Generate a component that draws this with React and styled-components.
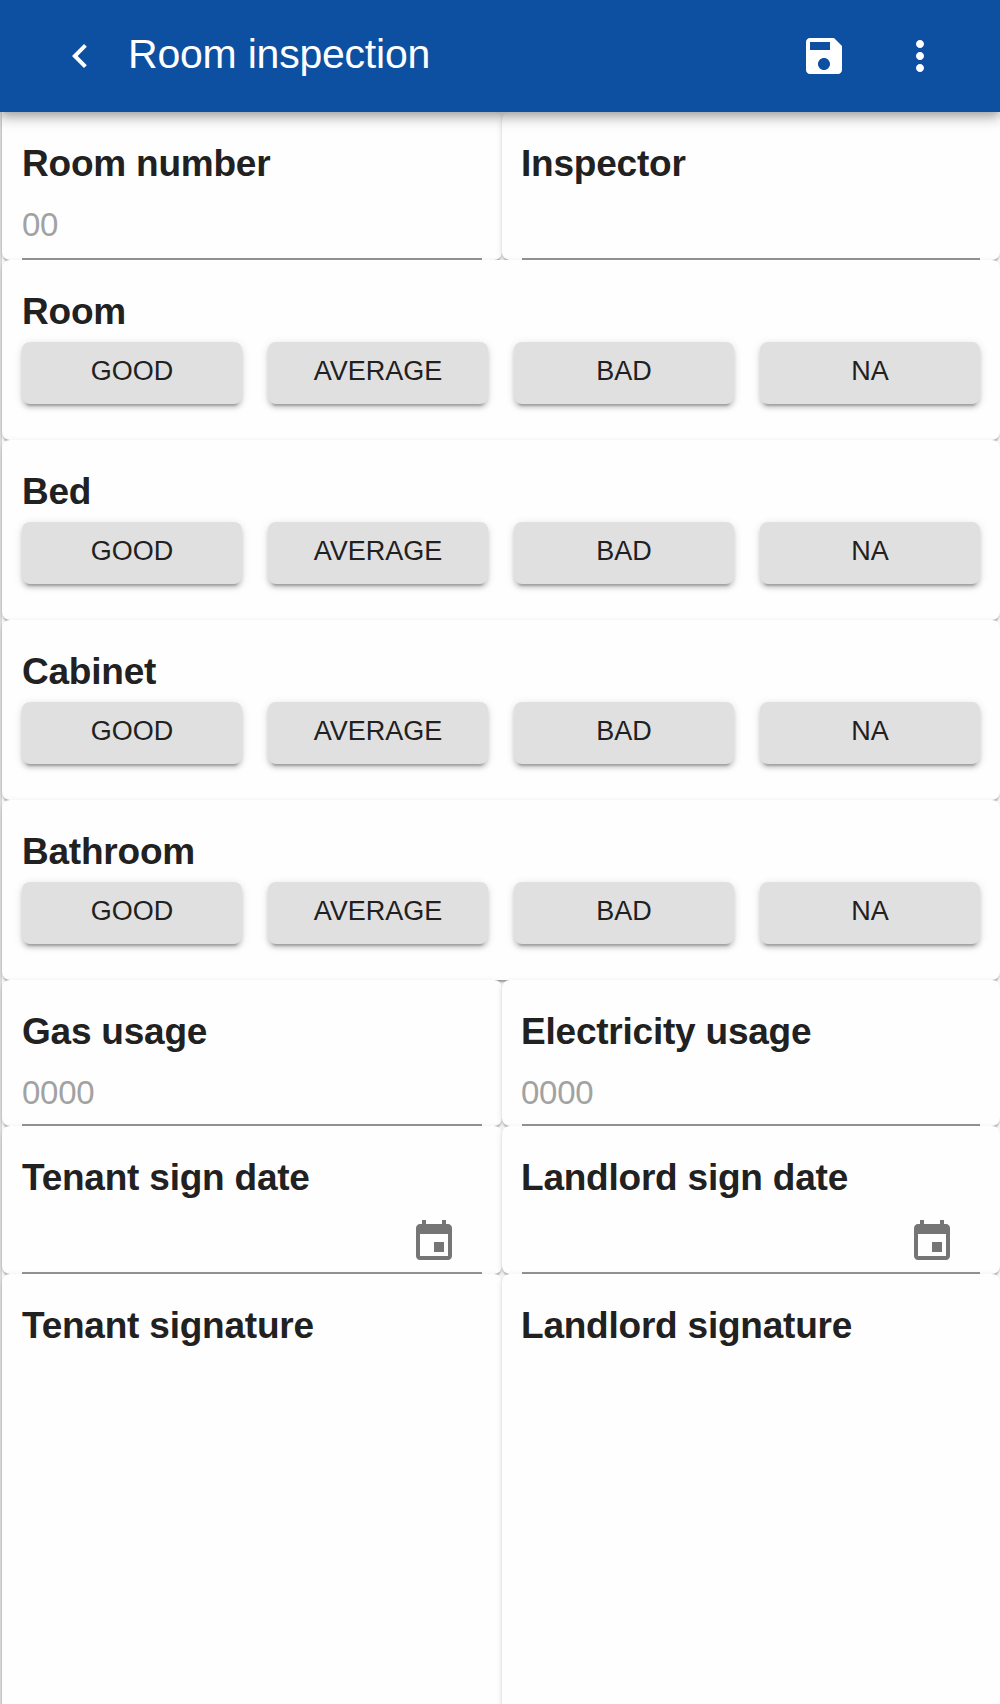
import React from "react";
import styled, { createGlobalStyle } from "styled-components";

const GlobalStyle = createGlobalStyle`
  *, *::before, *::after { box-sizing: border-box; }
  html, body { margin: 0; padding: 0; background: #e0e0e0; }
  body {
    font-family: Helvetica, "Liberation Sans", Arial, sans-serif;
    color: #212121;
    -webkit-font-smoothing: antialiased;
  }
`;

const Page = styled.div`
  height: 1704px;
  display: flex;
  flex-direction: column;
  overflow: hidden;
`;

const AppBar = styled.header`
  position: relative;
  z-index: 1;
  flex: none;
  display: flex;
  align-items: center;
  height: 112px;
  padding: 0 56px;
  background: #0d50a1;
  color: #fff;
  box-shadow:
    0 4px 8px -2px rgba(0, 0, 0, 0.2),
    0 8px 10px 0 rgba(0, 0, 0, 0.14),
    0 2px 20px 0 rgba(0, 0, 0, 0.12);
`;

const IconButton = styled.button`
  display: flex;
  width: 48px;
  height: 48px;
  padding: 0;
  border: 0;
  background: none;
  color: inherit;
`;

const Icon = styled.svg`
  width: 48px;
  height: 48px;
  fill: currentColor;
`;

const Title = styled.h1`
  flex: 1;
  margin: 0 0 4px 24px;
  font-size: 41px;
  line-height: 64px;
  font-weight: 400;
  letter-spacing: -0.22px;
`;

const Actions = styled.div`
  display: flex;
  gap: 48px;
`;

const Form = styled.main`
  flex: 1;
  display: flex;
  flex-direction: column;
  margin-left: 2px;
  background: #fefefe;
  box-shadow: -1px 0 0 rgba(0, 0, 0, 0.03);
`;

const Row = styled.div`
  display: grid;
  flex: ${(p) => (p.$height ? "none" : "1")};
  height: ${(p) => (p.$height ? `${p.$height}px` : "auto")};
  margin-bottom: ${(p) => (p.$height ? "0" : "-16px")};
  grid-template-columns: ${(p) => (p.$split ? "500px 498px" : "998px")};
`;

const Card = styled.section`
  display: flex;
  flex-direction: column;
  padding: 28px 20px 0;
  border-radius: 8px;
  background: #fefefe;
  box-shadow:
    0 4px 2px -2px rgba(0, 0, 0, 0.2),
    0 2px 2px 0 rgba(0, 0, 0, 0.14),
    0 2px 6px 0 rgba(0, 0, 0, 0.12);
`;

const Heading = styled.h2`
  margin: 0;
  font-size: 37px;
  line-height: 48px;
  font-weight: 700;
  letter-spacing: -0.22px;
  white-space: nowrap;
  ${Card} + ${Card} > & { margin-left: -1px; }
`;

const Field = styled.div`
  flex: 1;
  min-height: 0;
  display: flex;
  align-items: flex-start;
  padding-right: 24px;
  border-bottom: 2px solid #949494;
  color: #757575;

  ${IconButton} { margin-top: 16px; }
`;

const Input = styled.input`
  flex: 1;
  min-width: 0;
  height: 60px;
  margin-top: 7px;
  padding: 0;
  border: 0;
  outline: 0;
  background: none;
  font-family: inherit;
  font-size: 33px;
  letter-spacing: -0.25px;
  color: #212121;
  &::placeholder { color: #a2a2a2; opacity: 1; }
  ${Card} + ${Card} & { margin-left: -1px; }
`;

const Options = styled.div`
  display: grid;
  grid-template-columns: repeat(4, 220px);
  gap: 26px;
  margin-top: 6px;
`;

const Option = styled.button`
  height: 62px;
  padding: 0 0 4px;
  border: 0;
  border-radius: 8px;
  background: #e0e0e0;
  color: #212121;
  font-family: inherit;
  font-size: 27px;
  text-transform: uppercase;
  box-shadow:
    0 6px 2px -4px rgba(0, 0, 0, 0.2),
    0 4px 4px 0 rgba(0, 0, 0, 0.14),
    0 2px 10px 0 rgba(0, 0, 0, 0.12);
`;

const paths = {
  back: "M15.41 7.41L14 6l-6 6 6 6 1.41-1.41L10.83 12z",
  save: "M17 3H5c-1.11 0-2 .9-2 2v14c0 1.1.89 2 2 2h14c1.1 0 2-.9 2-2V7l-4-4zm-5 16c-1.66 0-3-1.34-3-3s1.34-3 3-3 3 1.34 3 3-1.34 3-3 3zm3-10H5V5h10v4z",
  more: "M12 8c1.1 0 2-.9 2-2s-.9-2-2-2-2 .9-2 2 .9 2 2 2zm0 2c-1.1 0-2 .9-2 2s.9 2 2 2 2-.9 2-2-.9-2-2-2zm0 6c-1.1 0-2 .9-2 2s.9 2 2 2 2-.9 2-2-.9-2-2-2z",
  event: "M17 12h-5v5h5v-5zM16 1v2H8V1H6v2H5c-1.11 0-1.99.9-1.99 2L3 19c0 1.1.89 2 2 2h14c1.1 0 2-.9 2-2V5c0-1.1-.9-2-2-2h-1V1h-2zm3 18H5V8h14v11z",
};

const Glyph = ({ name }) => (
  <Icon viewBox="0 0 24 24" aria-hidden="true">
    <path d={paths[name]} />
  </Icon>
);

const TextCard = ({ label, placeholder, date }) => (
  <Card>
    <Heading>{label}</Heading>
    <Field>
      <Input placeholder={placeholder} aria-label={label} />
      {date && (
        <IconButton aria-label="Pick date">
          <Glyph name="event" />
        </IconButton>
      )}
    </Field>
  </Card>
);

const ratings = ["Good", "Average", "Bad", "NA"];
const areas = ["Room", "Bed", "Cabinet", "Bathroom"];

export default function App() {
  return (
    <>
      <GlobalStyle />
      <Page>
        <AppBar>
          <IconButton aria-label="Back">
            <Glyph name="back" />
          </IconButton>
          <Title>Room inspection</Title>
          <Actions>
            <IconButton aria-label="Save">
              <Glyph name="save" />
            </IconButton>
            <IconButton aria-label="More">
              <Glyph name="more" />
            </IconButton>
          </Actions>
        </AppBar>
        <Form>
          <Row $split $height={148}>
            <TextCard label="Room number" placeholder="00" />
            <TextCard label="Inspector" />
          </Row>
          {areas.map((area) => (
            <Row key={area} $height={180}>
              <Card>
                <Heading>{area}</Heading>
                <Options>
                  {ratings.map((r) => (
                    <Option key={r}>{r}</Option>
                  ))}
                </Options>
              </Card>
            </Row>
          ))}
          <Row $split $height={146}>
            <TextCard label="Gas usage" placeholder="0000" />
            <TextCard label="Electricity usage" placeholder="0000" />
          </Row>
          <Row $split $height={148}>
            <TextCard label="Tenant sign date" date />
            <TextCard label="Landlord sign date" date />
          </Row>
          <Row $split>
            <Card>
              <Heading>Tenant signature</Heading>
            </Card>
            <Card>
              <Heading>Landlord signature</Heading>
            </Card>
          </Row>
        </Form>
      </Page>
    </>
  );
}
